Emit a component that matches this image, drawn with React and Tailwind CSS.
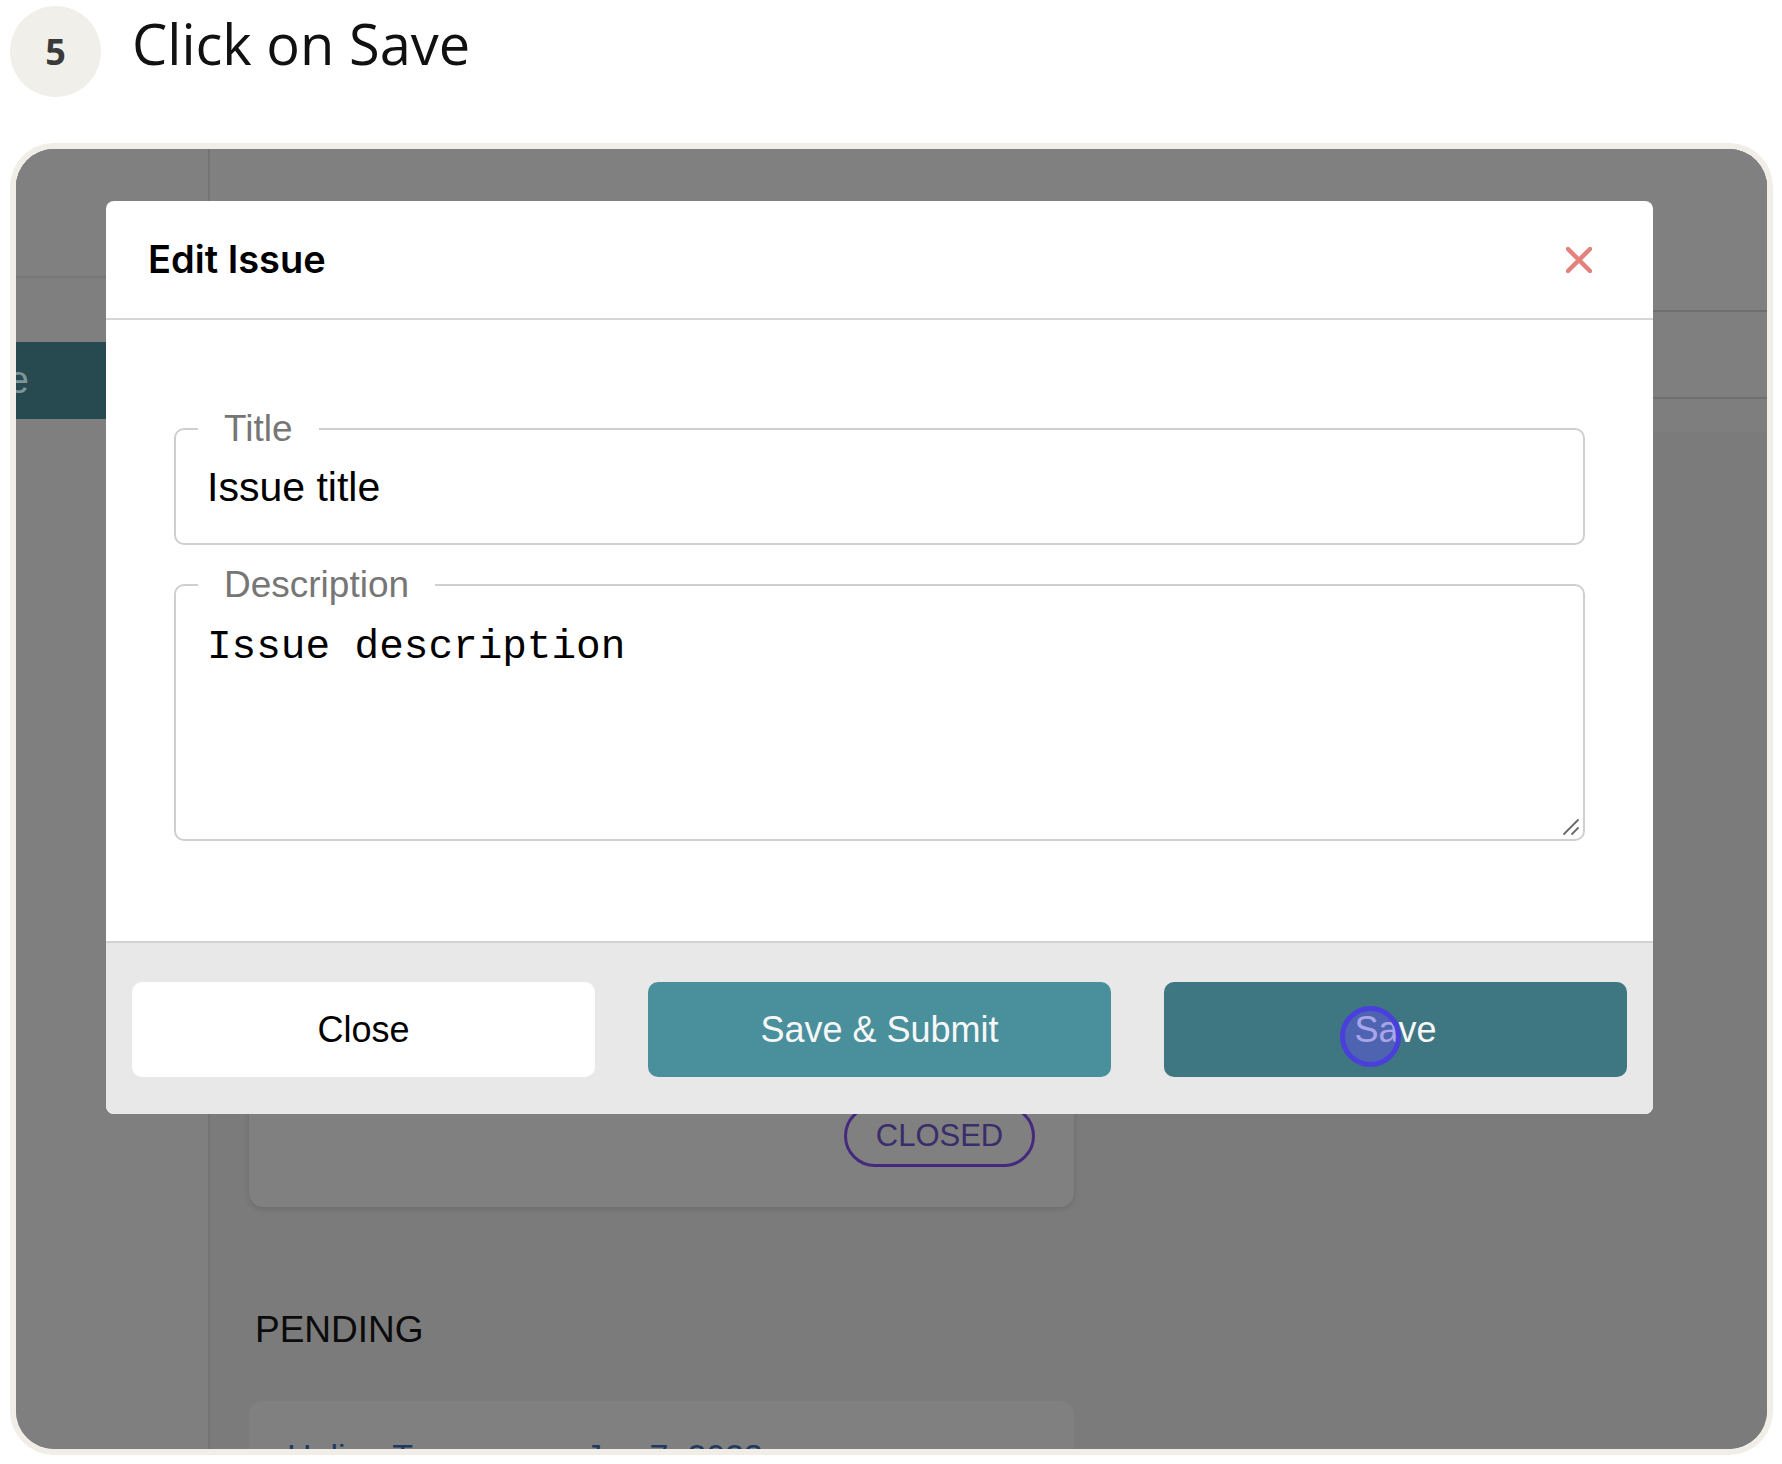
import React from 'react';

const sans = { fontFamily: '"Liberation Sans", Arial, sans-serif' };

const Field = ({ label, children }) => (
  <fieldset className="relative border-2 border-[#cfcfcf] rounded-[10px]">
    <legend className="ml-[22px] px-[26px] text-[37px] leading-[44px] text-[#767676]">{label}</legend>
    {children}
  </fieldset>
);

const EditIssueModal = () => (
  <div className="absolute left-[90px] top-[52px] w-[1547px] bg-white rounded-[8px] overflow-hidden" style={sans}>
    <div className="h-[119px] flex items-center justify-between pl-[42px] pr-[61px] border-b-2 border-[#d6d6d6]">
      <h2 className="text-[38px] font-semibold text-black font-['Inter',sans-serif]">Edit Issue</h2>
      <svg width="26" height="26" viewBox="0 0 26 26">
        <path d="M2 2 L24 24 M24 2 L2 24" stroke="#e3817c" strokeWidth="4.5" strokeLinecap="round" />
      </svg>
    </div>
    <div className="px-[68px] pt-[87px] pb-[100px] flex flex-col gap-[18px]">
      <Field label="Title">
        <input
          readOnly
          value="Issue title"
          className="block w-full h-[72px] pl-[31px] text-[41px] text-black outline-none bg-transparent mb-[20px]"
          style={sans}
        />
      </Field>
      <Field label="Description">
        <textarea
          readOnly
          value="Issue description"
          className="block w-full h-[232px] pl-[31px] pt-[16px] text-[41px] leading-[48px] text-black outline-none bg-transparent resize-none"
          style={{ fontFamily: '"Liberation Mono", "Courier New", monospace' }}
        />
        <svg className="absolute right-[3px] bottom-[3px]" width="18" height="18" viewBox="0 0 18 18">
          <path d="M2 16 L16 2 M10 16 L16 10" stroke="#6b6b6b" strokeWidth="1.8" strokeLinecap="round" />
        </svg>
      </Field>
    </div>
    <div className="bg-[#e8e8e8] border-t-2 border-[#d3d3d3] pt-[39px] pb-[37px] px-[26px] grid grid-cols-3 gap-[53px]">
      <button className="h-[95px] rounded-[10px] bg-white text-[36px] text-black">Close</button>
      <button className="h-[95px] rounded-[10px] bg-[#4a8f9c] text-[36px] text-[#f7f7f7]">Save &amp; Submit</button>
      <button className="relative h-[95px] rounded-[10px] bg-[#3e7782] text-[36px] text-[#f7f7f7]">
        Save
        <span className="absolute left-[176px] top-[24px] w-[61px] h-[61px] rounded-full border-[5px] border-[#4b3fdc] bg-[#5d52e0]/50"></span>
      </button>
    </div>
  </div>
);

const BackgroundPage = () => (
  <div className="flex h-full" style={sans}>
    <div className="w-[194px] shrink-0 bg-[#7f7f7f] border-r-2 border-[#747474]">
      <div className="h-[129px] border-b-2 border-[#767676] bg-[#808080]"></div>
      <div className="mt-[64px] h-[77px] bg-[#264a50] flex items-center overflow-hidden">
        <span className="ml-[-78px] text-[38px] text-[#7e9498] whitespace-nowrap">Issue</span>
      </div>
    </div>
    <div className="flex-1 flex flex-col bg-[#7b7b7b] overflow-hidden">
      <div className="h-[163px] shrink-0 bg-[#808080] border-b-2 border-[#6f6f6f]"></div>
      <div className="h-[87px] shrink-0 bg-[#7f7f7f] border-b-2 border-[#6f6f6f]"></div>
      <div className="h-[33px] shrink-0 bg-[#7e7e7e]"></div>
      <div className="pl-[39px] shrink-0">
        <div className="mt-[277px] w-[825px] h-[498px] rounded-[14px] bg-[#808080] shadow-[0_2px_6px_rgba(0,0,0,0.12)] flex flex-col justify-end items-end pr-[39px] pb-[40px]">
          <div className="w-[191px] h-[62px] rounded-full border-[3px] border-[#45297f] flex items-center justify-center text-[31px] text-[#392d6a]">
            CLOSED
          </div>
        </div>
        <div className="mt-[101px] ml-[6px] text-[37px] leading-[44px] text-[#0b0b0b]">PENDING</div>
        <div className="mt-[49px] w-[825px] h-[200px] rounded-[14px] bg-[#808080] pt-[35px] pl-[38px] flex gap-[55px] text-[34px] leading-[40px] text-[#1f3a60]">
          <span>Halina Tarasova</span>
          <span>Jan 7, 2023</span>
        </div>
      </div>
    </div>
  </div>
);

export default function App() {
  return (
    <div className="w-[1782px] h-[1464px] bg-white overflow-hidden">
      <div className="flex items-start">
        <div className="mt-[6px] ml-[10px] w-[91px] h-[91px] rounded-full bg-[#f1efe9] flex items-center justify-center text-[36px] font-bold text-[#3a3a3a] font-['Open_Sans',sans-serif]">
          5
        </div>
        <h1 className="mt-[5px] ml-[31px] text-[56px] leading-[76px] text-[#111] font-['Open_Sans',sans-serif]">Click on Save</h1>
      </div>
      <div className="mt-[46px] ml-[10px] w-[1763px] h-[1312px] rounded-[44px] bg-[#f1eee8] p-[6px]">
        <div className="relative w-full h-full rounded-[38px] overflow-hidden bg-[#7b7b7b]">
          <BackgroundPage />
          <EditIssueModal />
        </div>
      </div>
    </div>
  );
}
